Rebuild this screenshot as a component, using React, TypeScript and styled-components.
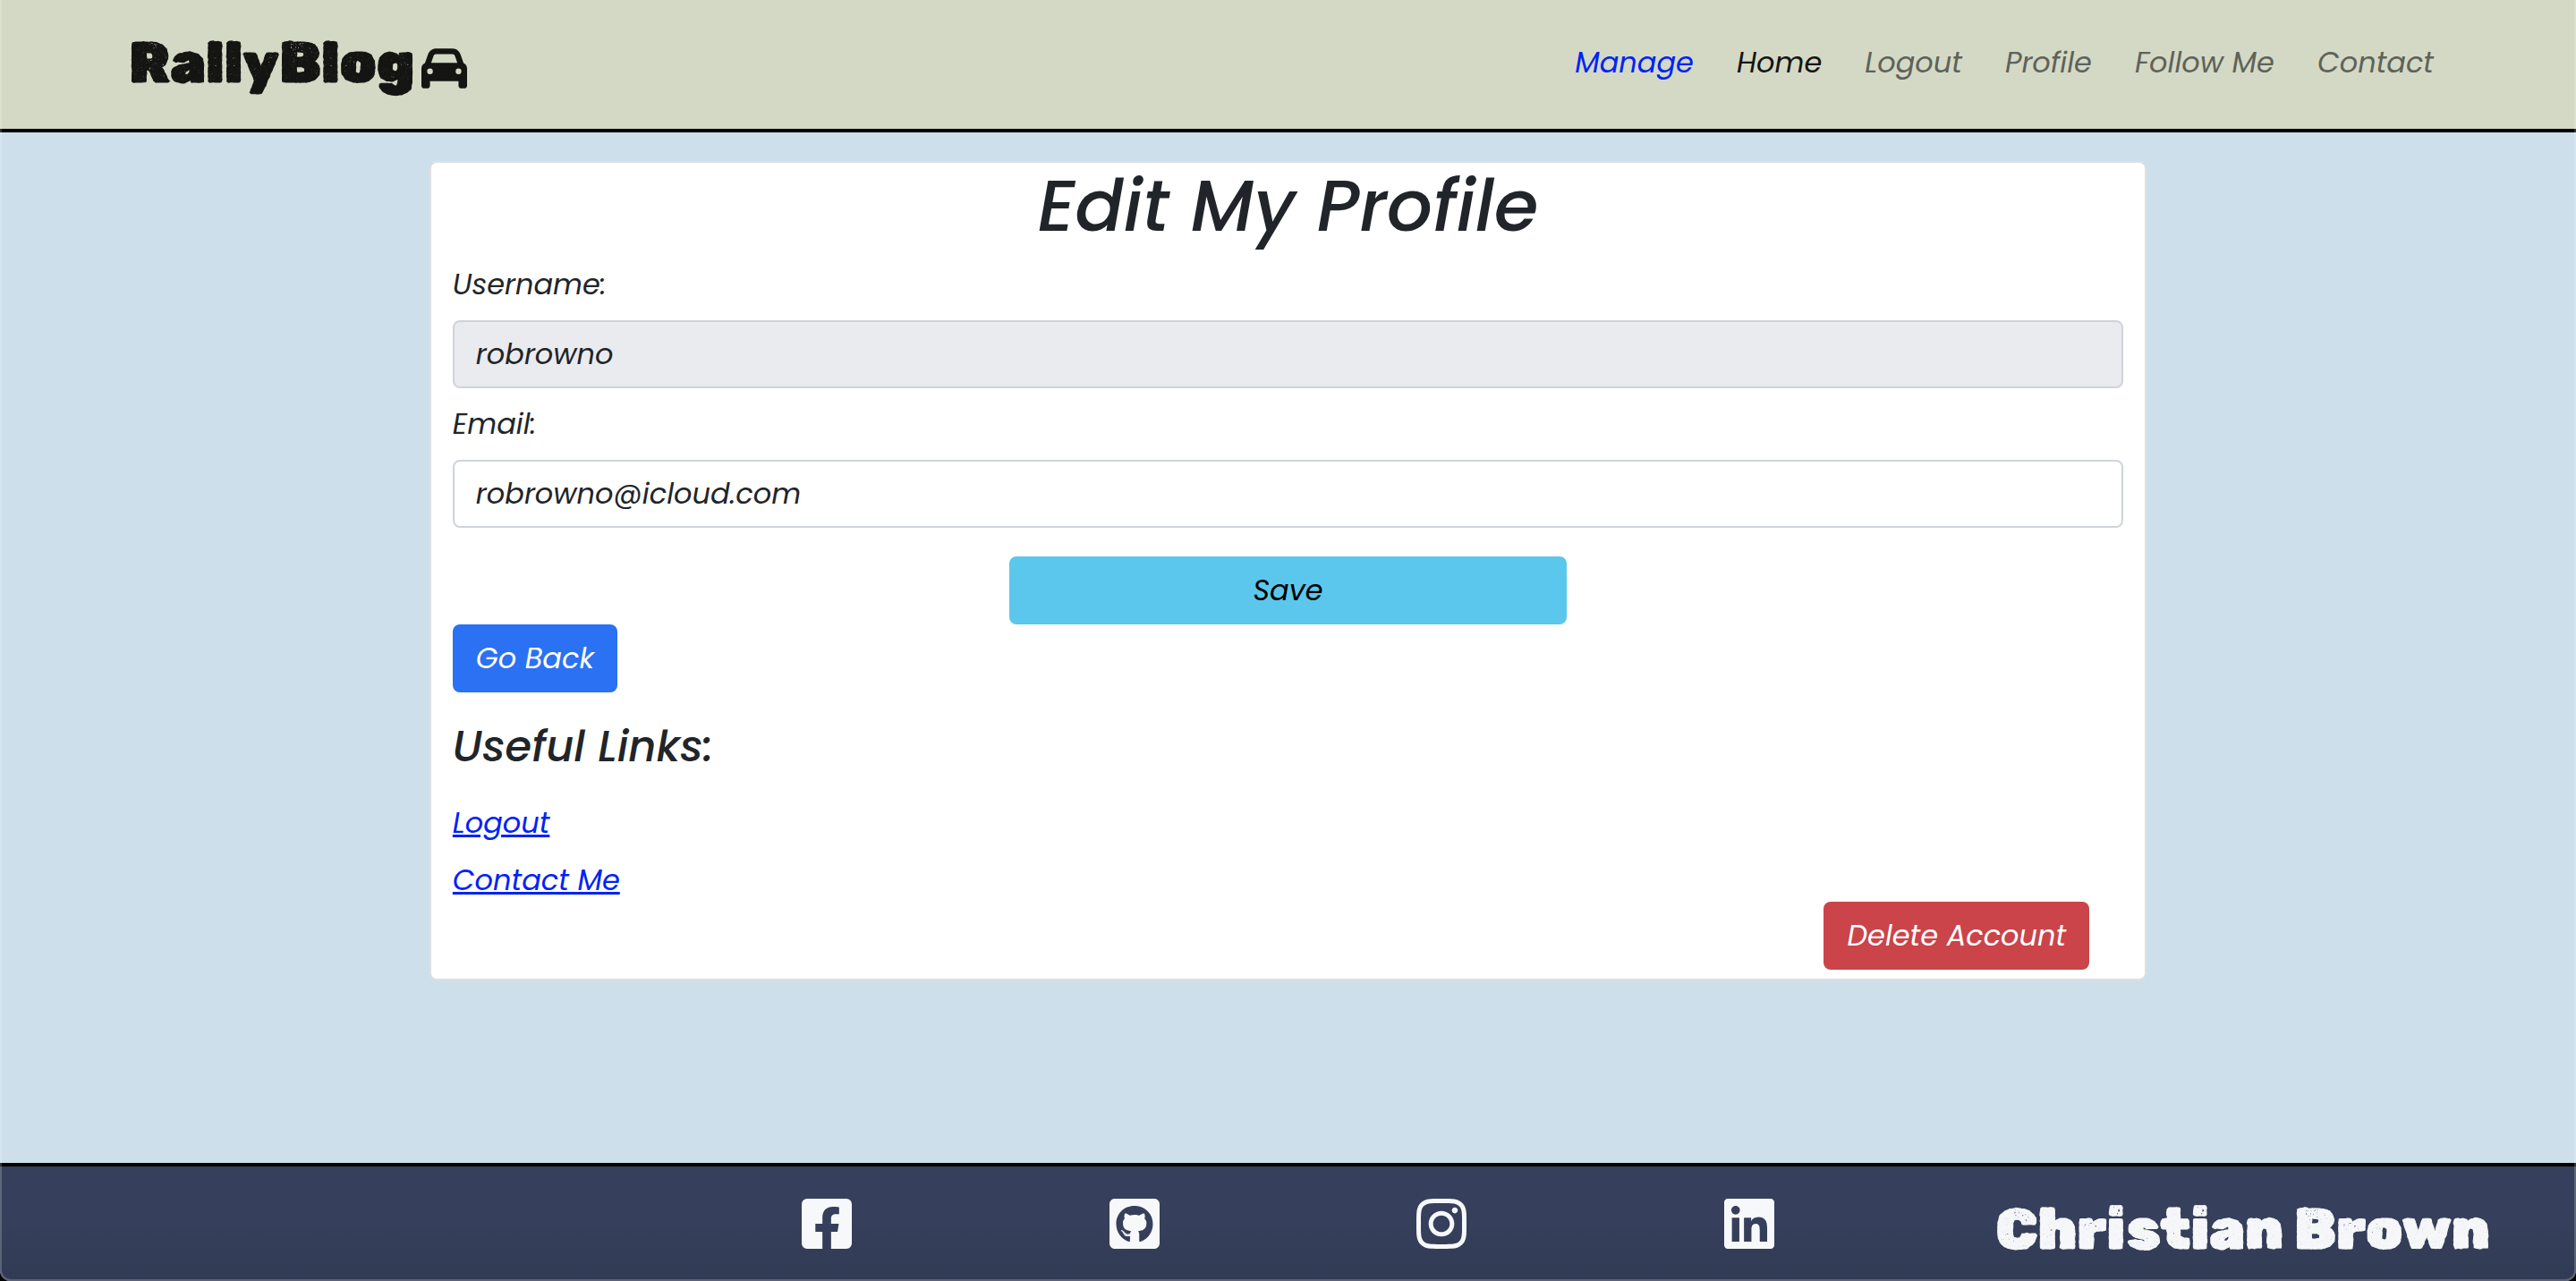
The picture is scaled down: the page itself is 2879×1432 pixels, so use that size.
import React from 'react';
import styled, { createGlobalStyle } from 'styled-components';
import { FaFacebookSquare, FaGithubSquare, FaInstagram, FaLinkedin } from 'react-icons/fa';
import { FaCar } from 'react-icons/fa6';

const GlobalStyle = createGlobalStyle`
  *, *::before, *::after { box-sizing: border-box; }
  body {
    margin: 0;
    background: #000;
    color: #212529;
    font-family: Poppins, Inter, "Liberation Sans", sans-serif;
    font-size: 32px;
    font-style: italic;
    line-height: 48px;
  }
`;

const Page = styled.div`
  position: relative;
  display: flex;
  flex-direction: column;
  min-height: 100vh;
  overflow: hidden;
  border-radius: 0 0 12px 12px;
  background: #cddfeb;

  &::after {
    content: '';
    position: absolute;
    inset: 0;
    border: 2px solid rgba(255, 255, 255, 0.2);
    border-top: 0;
    border-radius: inherit;
    pointer-events: none;
  }
`;

const Header = styled.header`
  display: flex;
  align-items: center;
  justify-content: space-between;
  height: 148px;
  padding: 0 159px 0 144px;
  border-bottom: 4px solid #000;
  background: #d4d9c5;
`;

const Brand = styled.a`
  display: flex;
  align-items: center;
  gap: 8px;
  padding-bottom: 4px;
  color: #141412;
  font-family: "Rubik Dirt", Inter, "Liberation Sans", sans-serif;
  font-size: 64px;
  font-style: normal;
  font-weight: 400;
  line-height: 80px;
  text-decoration: none;
  -webkit-text-stroke: 1px currentColor;

  svg { margin-top: 12px; }
`;

const Nav = styled.nav`
  display: flex;
  gap: 48px;
  padding-bottom: 4px;
`;

const NavLink = styled.a<{ $tone?: string }>`
  color: ${({ $tone }) => $tone || '#5f6259'};
  text-decoration: none;
`;

const Main = styled.main`
  flex: 1;
  padding-top: 32px;
`;

const Card = styled.section`
  width: 66.6667%;
  margin: 0 auto;
  padding: 0 24px 10px;
  border: 2px solid #dedfe0;
  border-radius: 8px;
  background: #fff;
`;

const Title = styled.h1`
  margin: 0 0 16px;
  font-size: 80px;
  font-weight: 500;
  line-height: 96px;
  text-align: center;
`;

const Field = styled.div`
  margin-bottom: 16px;
`;

const Label = styled.label`
  display: block;
  margin-bottom: 16px;
`;

const Input = styled.input`
  display: block;
  width: 100%;
  height: 76px;
  padding: 12px 24px;
  border: 2px solid #ced4da;
  border-radius: 8px;
  background: #fff;
  color: #212529;
  font: inherit;

  &:disabled { background: #eaebef; }
`;

const Button = styled.button<{ $bg: string; $fg?: string }>`
  height: 76px;
  padding: 12px 26px;
  border: 0;
  border-radius: 8px;
  background: ${({ $bg }) => $bg};
  color: ${({ $fg }) => $fg || '#fff'};
  font: inherit;
`;

const SaveButton = styled(Button)`
  display: block;
  width: 33.3333%;
  margin: 32px auto 0;
`;

const Subtitle = styled.h2`
  margin: 32px 0;
  font-size: 48px;
  font-weight: 500;
  line-height: 58px;
`;

const LinkList = styled.ul`
  display: flex;
  flex-direction: column;
  align-items: flex-start;
  gap: 16px;
  margin: 0;
  padding: 0;
  list-style: none;
`;

const TextLink = styled.a`
  color: #0023f5;
  text-decoration-thickness: 3px;
`;

const DangerRow = styled.div`
  display: flex;
  justify-content: flex-end;
  padding-right: 38px;
`;

const Footer = styled.footer`
  display: grid;
  grid-template-columns: 1fr 2fr 1fr;
  align-items: center;
  height: 132px;
  padding: 0 64px;
  border-top: 4px solid #000;
  background: linear-gradient(#363f5b, #363f5b 50%, #323b54);
`;

const Socials = styled.ul`
  display: grid;
  grid-column: 2;
  grid-template-columns: repeat(4, 1fr);
  justify-items: center;
  margin: 0;
  padding: 0;
  list-style: none;
`;

const SocialLink = styled.a`
  display: block;
  color: #f7f8fa;

  svg { display: block; width: 56px; height: 64px; }
`;

const Author = styled.span`
  padding: 12px 32px 0 0;
  color: #f6f7f9;
  font-family: "Rubik Dirt", Inter, "Liberation Sans", sans-serif;
  font-size: 64px;
  font-style: normal;
  font-weight: 400;
  line-height: 80px;
  text-align: right;
  white-space: nowrap;
  -webkit-text-stroke: 1px currentColor;
`;

const navItems = [
  { label: 'Manage', tone: '#0023f5' },
  { label: 'Home', tone: '#141412' },
  { label: 'Logout' },
  { label: 'Profile' },
  { label: 'Follow Me' },
  { label: 'Contact' },
];

const socials = [
  { label: 'Facebook', Icon: FaFacebookSquare },
  { label: 'GitHub', Icon: FaGithubSquare },
  { label: 'Instagram', Icon: FaInstagram },
  { label: 'LinkedIn', Icon: FaLinkedin },
];

export default function App() {
  return (
    <>
      <GlobalStyle />
      <Page>
        <Header>
          <Brand href="#">
            RallyBlog
            <FaCar size={51} />
          </Brand>
          <Nav>
            {navItems.map(({ label, tone }) => (
              <NavLink key={label} href="#" $tone={tone}>{label}</NavLink>
            ))}
          </Nav>
        </Header>
        <Main>
          <Card>
            <Title>Edit My Profile</Title>
            <form onSubmit={(event) => event.preventDefault()}>
              <Field>
                <Label htmlFor="username">Username:</Label>
                <Input id="username" defaultValue="robrowno" disabled />
              </Field>
              <Field>
                <Label htmlFor="email">Email:</Label>
                <Input id="email" type="email" defaultValue="robrowno@icloud.com" />
              </Field>
              <SaveButton type="submit" $bg="#5bc7ed" $fg="#000">Save</SaveButton>
            </form>
            <Button type="button" $bg="#2b71f3">Go Back</Button>
            <Subtitle>Useful Links:</Subtitle>
            <LinkList>
              <li><TextLink href="#">Logout</TextLink></li>
              <li><TextLink href="#">Contact Me</TextLink></li>
            </LinkList>
            <DangerRow>
              <Button type="button" $bg="#ca444a">Delete Account</Button>
            </DangerRow>
          </Card>
        </Main>
        <Footer>
          <Socials>
            {socials.map(({ label, Icon }) => (
              <li key={label}>
                <SocialLink href="#" aria-label={label}><Icon /></SocialLink>
              </li>
            ))}
          </Socials>
          <Author>Christian Brown</Author>
        </Footer>
      </Page>
    </>
  );
}
